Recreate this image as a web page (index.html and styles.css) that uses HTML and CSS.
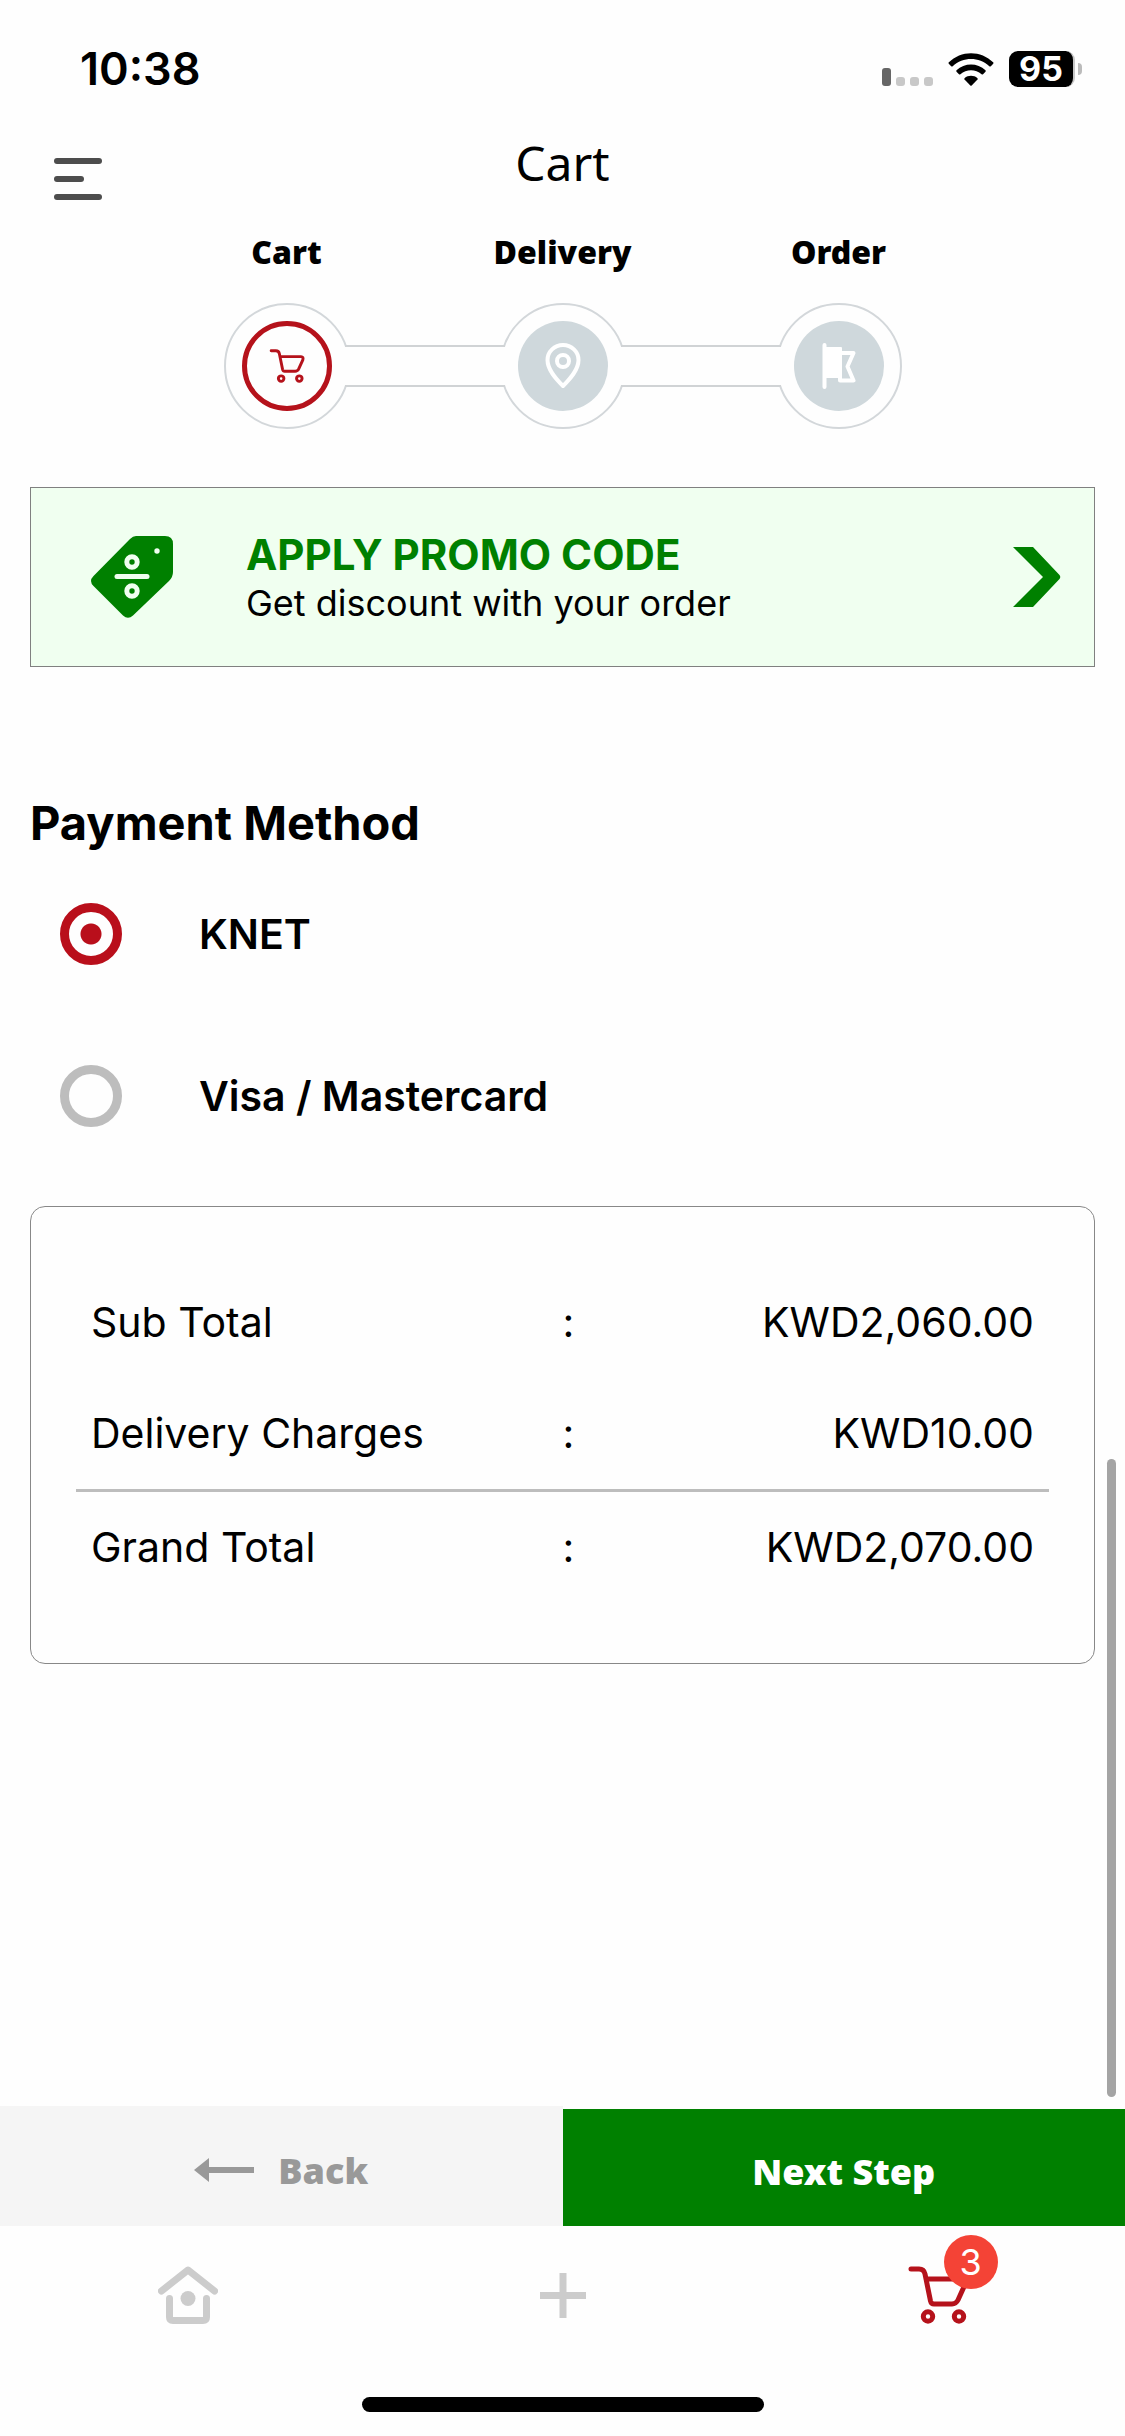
FILE: index.html
```html
<!DOCTYPE html>
<html lang="en">
<head>
    <meta charset="UTF-8">
    <meta name="viewport" content="width=device-width, initial-scale=1.0">
    <title>Cart</title>
    <link rel="stylesheet" href="styles.css">
</head>
<body>
    <!-- shared cart icon -->
    <svg class="sprite" width="0" height="0" aria-hidden="true">
        <symbol id="icon-cart" viewBox="0 0 60 58">
            <g fill="none" stroke="currentColor" stroke-width="5" stroke-linecap="round" stroke-linejoin="round">
                <path d="M3 3H11Q16 3 17 8L22.500 35Q23.200 38 26 38H44Q48 38 50 34L57 18.500Q58.500 13 54 13H18"/>
                <circle cx="20" cy="50.500" r="4.700"/>
                <circle cx="51" cy="50.500" r="4.700"/>
            </g>
        </symbol>
    </svg>

    <div class="status-bar">
        <span class="time">10:38</span>
        <div class="status-icons">
            <svg width="51" height="18" viewBox="0 0 51 18" class="signal">
                <rect width="9" height="18" rx="3" fill="#666"/>
                <rect x="14" y="9" width="9" height="9" rx="3" fill="#c8c8c8"/>
                <rect x="28" y="9" width="9" height="9" rx="3" fill="#c8c8c8"/>
                <rect x="42" y="9" width="9" height="9" rx="3" fill="#c8c8c8"/>
            </svg>
            <svg width="46" height="33" viewBox="0 0 46 33">
                <path d="M0.600 9.500C13 -3 33 -3 45.400 9.500Q45.700 10.400 45 11L42.800 13.200Q42 13.700 41.300 13.200C31 3.500 15 3.500 4.700 13.200Q4 13.700 3.200 13.200L1 11Q0.300 10.400 0.600 9.500Z"/>
                <path d="M8.500 17.300C16.500 9.700 29.500 9.700 37.500 17.300Q38 18 37.500 18.700L35 21.200Q34.300 21.700 33.600 21.200C27.600 15.800 18.400 15.800 12.400 21.200Q11.700 21.700 11 21.200L8.500 18.700Q8 18 8.500 17.300Z"/>
                <path d="M16.500 25.200C20.200 22 25.800 22 29.500 25.200Q30 26 29.500 26.600L23.700 32.400Q23 33 22.300 32.400L16.500 26.600Q16 26 16.500 25.200Z"/>
            </svg>
            <div class="battery">
                <span class="battery-level">95</span>
                <span class="battery-tip"></span>
            </div>
        </div>
    </div>

    <header class="header">
        <button class="menu-btn" aria-label="Menu">
            <span class="line"></span>
            <span class="line short"></span>
            <span class="line"></span>
        </button>
        <h1 class="title">Cart</h1>
    </header>

    <main class="content">
        <div class="stepper">
            <div class="step active">
                <span class="step-label">Cart</span>
                <div class="step-ring">
                    <div class="step-circle">
                        <svg width="36" height="34"><use href="#icon-cart"/></svg>
                    </div>
                </div>
            </div>
            <div class="connector"></div>
            <div class="step">
                <span class="step-label">Delivery</span>
                <div class="step-ring">
                    <div class="step-circle">
                        <svg width="36" height="46" viewBox="0 0 36 46" fill="none" stroke="#fff" stroke-width="4">
                            <path d="M18 43C11 36 2.500 27 2.500 17A15.500 15 0 0 1 33.500 17C33.500 27 25 36 18 43Z" stroke-linejoin="round"/>
                            <circle cx="18" cy="18" r="6"/>
                        </svg>
                    </div>
                </div>
            </div>
            <div class="connector"></div>
            <div class="step">
                <span class="step-label">Order</span>
                <div class="step-ring">
                    <div class="step-circle">
                        <svg width="34" height="46" viewBox="0 0 34 46">
                            <rect x="0.500" width="4" height="46" rx="2" fill="#fff"/>
                            <rect x="3" y="4" width="17" height="31" rx="1" fill="#fff"/>
                            <path d="M19 10H31.500L25.500 23.500L31.500 37.500H18V34" fill="none" stroke="#fff" stroke-width="4" stroke-linejoin="round"/>
                        </svg>
                    </div>
                </div>
            </div>
        </div>

        <button class="promo">
            <svg class="promo-tag" width="82" height="82" viewBox="0 0 82 82">
                <path d="M45 0H74Q82 0 82 8V36Q82 41 78 45L42 79.500Q37 84 32 79.500L2.500 50Q-2.500 45 2.500 40L39 3Q42 0 45 0Z" fill="green"/>
                <circle cx="66" cy="15" r="2.700" fill="#f0fff0"/>
                <g fill="none" stroke="#f0fff0" stroke-width="5">
                    <circle cx="41" cy="26" r="5.200"/>
                    <circle cx="41" cy="55" r="5.200"/>
                    <path d="M26 40.500H56" stroke-linecap="round"/>
                </g>
            </svg>
            <span class="promo-text">
                <strong class="promo-title">APPLY PROMO CODE</strong>
                <span class="promo-sub">Get discount with your order</span>
            </span>
            <svg width="48" height="60" viewBox="0 0 48 60">
                <path d="M0 0H20L46.500 28Q48 30 46.500 32L20 60H0L30 30Z" fill="green"/>
            </svg>
        </button>

        <h2 class="section-title">Payment Method</h2>
        <div class="methods">
            <label class="method">
                <input type="radio" name="payment" checked>
                <span>KNET</span>
            </label>
            <label class="method">
                <input type="radio" name="payment">
                <span>Visa / Mastercard</span>
            </label>
        </div>

        <div class="summary">
            <table class="totals">
                <tr>
                    <th scope="row">Sub Total</th>
                    <td>:</td>
                    <td class="amount">KWD2,060.00</td>
                </tr>
                <tr class="charges">
                    <th scope="row">Delivery Charges</th>
                    <td>:</td>
                    <td class="amount">KWD10.00</td>
                </tr>
                <tr>
                    <th scope="row">Grand Total</th>
                    <td>:</td>
                    <td class="amount">KWD2,070.00</td>
                </tr>
            </table>
        </div>
        <div class="scroll-thumb"></div>
    </main>

    <footer>
        <div class="actions">
            <button class="back-btn">
                <svg width="60" height="24" viewBox="0 0 60 24" fill="#999">
                    <path d="M0 12L15 0V24Z"/>
                    <rect x="14" y="9" width="46" height="6"/>
                </svg>
                Back
            </button>
            <button class="next-btn">Next Step</button>
        </div>
        <nav class="tabs">
            <a href="#" class="tab" aria-label="Home">
                <svg width="60" height="58" viewBox="0 0 60 58">
                    <g fill="none" stroke="currentColor" stroke-width="7" stroke-linecap="round" stroke-linejoin="round">
                        <path d="M3.500 25L30 4L56.500 25"/>
                        <path d="M11.500 32.500V51Q11.500 54.500 15 54.500H45Q48.500 54.500 48.500 51V32.500"/>
                    </g>
                    <circle cx="30" cy="32.500" r="7.500" fill="currentColor"/>
                </svg>
            </a>
            <a href="#" class="tab" aria-label="Add">
                <svg width="46" height="58" viewBox="0 0 46 58" fill="none" stroke="currentColor" stroke-width="7">
                    <path d="M0 29.500H46M23 7V52"/>
                </svg>
            </a>
            <a href="#" class="tab current" aria-label="Cart">
                <svg width="60" height="58"><use href="#icon-cart"/></svg>
                <span class="badge">3</span>
            </a>
        </nav>
        <div class="home-indicator"></div>
    </footer>
</body>
</html>
```

FILE: styles.css
```css
* {
    box-sizing: border-box;
}
body {
    display: flex;
    flex-direction: column;
    min-height: 100vh;
    margin: 0;
    background-color: #fefefe;
    color: #000;
    font-family: Inter, "Liberation Sans", sans-serif;
}
button {
    border: none;
    padding: 0;
    font-family: inherit;
    cursor: pointer;
}
svg {
    display: block;
    flex-shrink: 0;
}
.sprite {
    position: absolute;
}

/* status bar */
.status-bar {
    display: flex;
    justify-content: space-between;
    align-items: center;
    padding: 41px 43px 0 80px;
}
.time {
    font-size: 45px;
    font-weight: 600;
    line-height: 56px;
}
.status-icons {
    display: flex;
    align-items: center;
    gap: 15px;
}
.signal {
    margin-top: 15px;
}
.battery {
    display: flex;
    align-items: center;
    gap: 3px;
}
.battery-level {
    width: 66px;
    border-right: 2px solid #c8c8c8;
    border-radius: 9px;
    background-color: #000;
    color: #fff;
    font-size: 34px;
    font-weight: 700;
    line-height: 36px;
    text-align: center;
}
.battery-tip {
    width: 4px;
    height: 12px;
    border-radius: 0 6px 6px 0;
    background-color: #bbb;
}

/* header */
.header {
    display: grid;
    grid-template-columns: 1fr auto 1fr;
    align-items: start;
    padding: 33px 54px 0;
}
.menu-btn {
    display: flex;
    flex-direction: column;
    gap: 12px;
    width: 48px;
    margin-top: 28px;
    background: none;
}
.line {
    width: 48px;
    height: 6px;
    border-radius: 3px;
    background-color: #4d4d4d;
}
.line.short {
    width: 30px;
}
.title {
    margin: 0;
    font-family: "Noto Sans", sans-serif;
    font-size: 48px;
    font-weight: 400;
    line-height: 66px;
}

.content {
    position: relative;
    flex: 1;
    padding: 30px 30px 0;
}

/* stepper */
.stepper {
    display: flex;
    align-items: flex-end;
    max-width: 678px;
    margin: 0 auto;
}
.step {
    display: flex;
    flex-direction: column;
    align-items: center;
    gap: 29px;
    width: 126px;
}
.step-label {
    font-family: "Noto Sans", sans-serif;
    font-size: 32px;
    font-weight: 900;
    line-height: 44px;
}
.step-ring {
    display: flex;
    justify-content: center;
    align-items: center;
    width: 126px;
    height: 126px;
    border: 2px solid #d3d7da;
    border-radius: 50%;
}
.step-circle {
    display: flex;
    justify-content: center;
    align-items: center;
    width: 90px;
    height: 90px;
    border-radius: 50%;
    background-color: #cfd8dc;
}
.active .step-circle {
    border: 5px solid #b5121b;
    background-color: #fefefe;
    color: #b5121b;
}
.connector {
    position: relative;
    flex: 1;
    height: 42px;
    margin: 0 -5px 42px;
    border: solid #d0d3d5;
    border-width: 2px 0;
    background-color: #fefefe;
}

/* promo */
.promo {
    display: flex;
    align-items: center;
    width: 100%;
    height: 180px;
    margin-top: 58px;
    padding: 0 33px 0 60px;
    border: 1px solid #808080;
    background-color: #f0fff0;
    color: #000;
    text-align: left;
}
.promo-text {
    display: flex;
    flex-direction: column;
    flex: 1;
    margin-left: 73px;
    padding-top: 4px;
}
.promo-title {
    color: green;
    font-size: 42px;
    line-height: 48px;
}
.promo-sub {
    font-size: 36px;
    line-height: 48px;
}

/* payment */
.section-title {
    margin: 126px 0 50px;
    font-size: 47px;
    font-weight: 700;
    line-height: 60px;
}
.methods {
    display: flex;
    flex-direction: column;
    gap: 100px;
    padding-left: 30px;
}
.method {
    display: flex;
    align-items: center;
    gap: 77px;
    font-size: 41px;
    font-weight: 600;
    line-height: 62px;
}
.method input {
    appearance: none;
    width: 62px;
    height: 62px;
    margin: 0;
    border: 9px solid #bdbdbd;
    border-radius: 50%;
}
.method input:checked {
    border-color: #b90f1b;
    background: radial-gradient(circle, #b90f1b 10px, transparent 11px);
}

/* totals */
.summary {
    margin-top: 79px;
    padding: 60px 45px;
    border: 1px solid #888;
    border-radius: 15px;
}
.totals {
    width: 100%;
    border-spacing: 0;
    table-layout: fixed;
    font-size: 41px;
    line-height: 60px;
}
.totals th, .totals td {
    padding: 25px 0 26px;
    font-weight: 400;
}
.totals th {
    width: 50%;
    padding-left: 15px;
    text-align: left;
}
.totals td:nth-child(2) {
    width: 5%;
}
.totals .amount {
    padding-right: 15px;
    text-align: right;
}
.charges th, .charges td {
    border-bottom: 3px solid #bdbdbd;
}
.scroll-thumb {
    position: absolute;
    right: 9px;
    bottom: 9px;
    width: 9px;
    height: 638px;
    border-radius: 5px;
    background-color: #a4a4a4;
}

/* footer */
.actions {
    display: grid;
    grid-template-columns: 1fr 1fr;
    align-items: end;
}
.back-btn, .next-btn {
    display: flex;
    justify-content: center;
    align-items: center;
    padding-top: 8px;
    font-family: "Noto Sans", sans-serif;
    font-size: 36px;
    font-weight: 900;
}
.back-btn {
    gap: 24px;
    height: 120px;
    background-color: #f5f5f5;
    color: #999;
}
.next-btn {
    height: 117px;
    background-color: green;
    color: #fff;
}
.tabs {
    display: grid;
    grid-template-columns: repeat(3, 1fr);
    justify-items: center;
    padding-top: 40px;
}
.tab {
    position: relative;
    color: #ccc;
    text-decoration: none;
}
.tab.current {
    color: #b5121b;
}
.badge {
    position: absolute;
    top: -31px;
    left: 36px;
    width: 54px;
    height: 54px;
    border-radius: 50%;
    background-color: #f44336;
    color: #fff;
    font-size: 36px;
    line-height: 54px;
    text-align: center;
}
.home-indicator {
    width: 402px;
    height: 15px;
    margin: 73px auto 24px;
    border-radius: 8px;
    background-color: #000;
}
```
